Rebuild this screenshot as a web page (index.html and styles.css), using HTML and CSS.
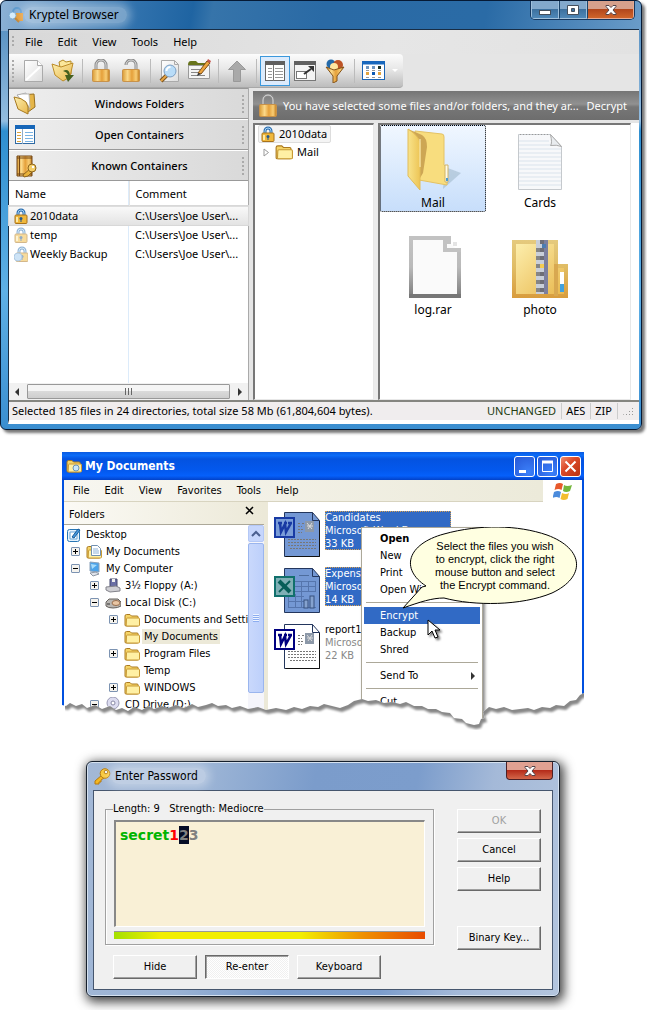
FILE: index.html
```html
<!DOCTYPE html>
<html lang="en">
<head>
<meta charset="utf-8">
<title>Kryptel</title>
<link rel="stylesheet" href="styles.css">
</head>
<body>
<svg class="defs" width="0" height="0" aria-hidden="true">
  <defs>
    <linearGradient id="gold" x1="0" x2="1"><stop offset="0" stop-color="#d99a35"/><stop offset=".3" stop-color="#fbd98a"/><stop offset=".55" stop-color="#e5a03a"/><stop offset=".8" stop-color="#f8cd75"/><stop offset="1" stop-color="#c07a1c"/></linearGradient>
    <linearGradient id="yel" x1="0" y1="0" x2="1" y2="1"><stop offset="0" stop-color="#fdf0b0"/><stop offset="1" stop-color="#e8b64a"/></linearGradient>
    <linearGradient id="paper" x1="0" y1="0" x2="1" y2="1"><stop offset="0" stop-color="#fff"/><stop offset="1" stop-color="#dedede"/></linearGradient>
    <linearGradient id="edge" gradientUnits="userSpaceOnUse" x1="0" y1="0" x2="0" y2="66"><stop offset="0" stop-color="#c4c4c4"/><stop offset=".5" stop-color="#bababa"/><stop offset="1" stop-color="#777"/></linearGradient>
    <linearGradient id="zipedge" gradientUnits="userSpaceOnUse" x1="0" y1="0" x2="0" y2="66"><stop offset="0" stop-color="#e6cd84"/><stop offset=".5" stop-color="#e0bc64"/><stop offset="1" stop-color="#d89a3a"/></linearGradient>
    <symbol id="lock" viewBox="0 0 20 24"><path d="M5 11V6a5 5 0 0 1 10 0v5" fill="none" stroke="#8a8a8a" stroke-width="3"/><path d="M5 11V6a5 5 0 0 1 10 0v5" fill="none" stroke="#ddd" stroke-width="1"/><rect x="1.500" y="10.500" width="17" height="12" rx="1" fill="url(#gold)" stroke="#c8924a"/></symbol>
    <symbol id="unlock" viewBox="0 0 20 24"><path d="M5 6a5 5 0 0 1 10 0v5" fill="none" stroke="#8a8a8a" stroke-width="3"/><path d="M5 6a5 5 0 0 1 10 0v5" fill="none" stroke="#ddd" stroke-width="1"/><rect x="1.500" y="10.500" width="17" height="12" rx="1" fill="url(#gold)" stroke="#c8924a"/></symbol>
    <symbol id="bluelock" viewBox="0 0 14 16"><path d="M4 8V5a3 3 0 0 1 6 0v3" fill="none" stroke="#2a6db0" stroke-width="3"/><path d="M4 8V5a3 3 0 0 1 6 0v3" fill="none" stroke="#a8d4f4" stroke-width="1"/><rect x="1" y="7" width="12" height="8.500" rx="1" fill="#f0b83c" stroke="#a8721a"/><path d="M3 9v5" stroke="#fde9a6" stroke-width="2"/><circle cx="7" cy="10.500" r="1.500" fill="#26588c"/><path d="M7 11v3" stroke="#26588c"/></symbol>
    <symbol id="folder" viewBox="0 0 16 14"><path d="M1 3q0-1.500 1.500-1.500h3.500l1.500 1.500h5.500q1.200 0 1.200 1.200V12q0 1-1 1H2Q1 13 1 12z" fill="#f5d467" stroke="#ab7a20"/><path d="M2.500 6q0-1 1-1h11q1 0 1 1v6q0 1-1 1H3q-.8 0-.8-1z" fill="#fff0a4" stroke="#c89a36"/></symbol>
    <symbol id="openfolder" viewBox="0 0 24 24"><path d="M7 3l14-1 1 13-7 5z" fill="#e5b548" stroke="#98701f"/><path d="M4 3l9-2 3 17z" fill="#fff" stroke="#aaa"/><path d="M9 2l7 0 1 14" fill="#fff" stroke="#bbb"/><path d="M1 5q8 1 12 5 3 4 2 12L5 17z" fill="url(#yel)" stroke="#a77a22"/></symbol>
    <symbol id="worddoc" viewBox="0 0 48 48"><path d="M11.500 2.500h28l7 8v36h-35z" fill="var(--page)" stroke="#23365d"/><path d="M39.500 2.500v8h7" fill="none" stroke="#23365d"/><path d="M25 13.500h3m1 0h2m-6 3h4m-4 3h5m-5 3h4M15 29.500h28M15 32.500h28M15 35.500h28M17 38.500h26" stroke="#777" stroke-dasharray="2 1"/><rect x="32" y="11" width="9" height="11" fill="#8c98a8"/><path d="M34 13l5 6m0-6l-4 6m-1-3h6" stroke="#ddd"/><rect x="2" y="8" width="19" height="19" fill="var(--badge)" stroke="var(--ink)" stroke-width="2"/><path d="M5 13h4M7 13l1 9 4-8 1 8 5-9M11 13h3M15 13h4" fill="none" stroke="var(--ink)" stroke-width="2.500"/><path d="M46.500 11v35.500h-34" fill="none" stroke="#111"/></symbol>
    <symbol id="exceldoc" viewBox="0 0 48 48"><path d="M11.500 2.500h28l7 8v36h-35z" fill="var(--page)" stroke="#23365d"/><path d="M39.500 2.500v8h7" fill="none" stroke="#23365d"/><path d="M26 9.500h10" stroke="#4e6d9e"/><path d="M22 15.500h21M22 20.500h21M22 25.500h21M15 30.500h16M15 35.500h16M15 41.500h28M15.500 28v13M22.500 28v13M28.500 15v26M35.500 15v10M42.500 15v10" stroke="#5575ad"/><rect x="31" y="34" width="4" height="8" fill="#85a2cf" stroke="#36507e"/><rect x="37" y="30" width="4" height="12" fill="#85a2cf" stroke="#36507e"/><rect x="2" y="11" width="19" height="19" fill="#7fafb5" stroke="#11706c" stroke-width="2"/><path d="M6 15l11 11" stroke="#075e58" stroke-width="4"/><path d="M17 15L6 26" stroke="#075e58" stroke-width="2"/></symbol>
    <symbol id="key" viewBox="0 0 18 18"><path d="M9 8l-7 6v3h4v-2h2v-2l3-2" fill="#f3b722" stroke="#b6790c"/><circle cx="12" cy="6.500" r="4.800" fill="#f8c83c" stroke="#b6790c"/><circle cx="13" cy="5" r="1.800" fill="#eef4fa" stroke="#b6790c"/></symbol>
  </defs>
</svg>

<section class="browser" aria-label="Kryptel Browser">
  <header class="aero-title">
    <svg class="app-icon" viewBox="0 0 16 16"><path d="M5 7V5a4 4 0 0 1 8 0v2" fill="none" stroke="#5d9ace" stroke-width="2"/><path d="M6 6h9v8h-4l-5-3z" fill="#e39a35"/><circle cx="4.500" cy="8.500" r="3.500" fill="#d6ecfa" stroke="#7fb0d8"/><path d="M7 11l4 4" stroke="#c08434" stroke-width="2"/></svg>
    <span class="glow">Kryptel Browser</span>
    <div class="aero-buttons">
      <button class="cap" aria-label="Minimize"><svg viewBox="0 0 14 12"><rect x="1.500" y="6.500" width="11" height="4" fill="#fff" stroke="#454f5c"/></svg></button><button class="cap" aria-label="Maximize"><svg viewBox="0 0 14 12"><path d="M1.500 1.500h11v9h-11zM5.500 4.500v3h3v-3z" fill="#fff" stroke="#454f5c" fill-rule="evenodd"/></svg></button><button class="cap cap-close" aria-label="Close"><svg viewBox="0 0 14 12"><path d="M2 1.500h3l2 2 2-2h3v1L9 6l3 3.500v1H9l-2-2-2 2H2v-1L5 6 2 2.500z" fill="#fff" stroke="#54454a"/></svg></button>
    </div>
  </header>
  <div class="client">
    <nav class="menubar"><i class="grip"></i><button>File</button><button>Edit</button><button>View</button><button>Tools</button><button>Help</button></nav>
    <div class="toolbar" role="toolbar" aria-label="Tools">
      <i class="grip"></i>
      <button aria-label="New"><svg viewBox="0 0 24 24"><path d="M3.500 1.500h13l5 5v16h-18z" fill="url(#paper)" stroke="#aaa"/><path d="M16.500 1.500v5h5" fill="#fff" stroke="#aaa"/><path d="M5 21L19 8" stroke="#fff" stroke-width="2"/></svg></button>
      <button aria-label="Open"><svg viewBox="0 0 24 24"><path d="M8 3l4-2 3 2 5-1v13l-9 4z" fill="#fbe79b" stroke="#b58a24"/><path d="M1 5l9 3 12-4-3 14-7 4L4 16z" fill="url(#yel)" stroke="#bd8c28"/><path d="M12 12q6-3 7 4h4l-6 7-3-7h3q-1-3-5-4" fill="#44601f"/></svg></button>
      <i class="sep"></i>
      <button aria-label="Encrypt"><svg viewBox="0 0 24 24"><use href="#lock" x="2" width="20" height="24"/></svg></button>
      <button aria-label="Decrypt"><svg viewBox="0 0 24 24"><use href="#unlock" x="2" width="20" height="24"/></svg></button>
      <i class="sep"></i>
      <button aria-label="Preview"><svg viewBox="0 0 24 24"><path d="M4.500 1.500h13l4 4v17h-17z" fill="url(#paper)" stroke="#aaa"/><path d="M17.500 1.500v4h4" fill="none" stroke="#aaa"/><path d="M10 16l-6 6" stroke="#7c5523" stroke-width="4"/><path d="M10 16l-6 6" stroke="#e7a443" stroke-width="2"/><circle cx="13" cy="12" r="6" fill="#b8dcf8" stroke="#7c9fc4"/><path d="M9.500 12a4 4 0 0 1 4-4" fill="none" stroke="#fff" stroke-width="2"/></svg></button>
      <button aria-label="Rename"><svg viewBox="0 0 24 24"><path d="M1 6q0-4 3-4h5l2 2h9v3H1z" fill="#66731b"/><path d="M1.500 6.500h21v13h-21z" fill="#f4f4f4" stroke="#9a9a9a"/><path d="M4 10.500h9M4 13.500h7M4 16.500h14" stroke="#888"/><path d="M11 14l9-12 3 2-9 11z" fill="#eda33d" stroke="#7b4d17"/><path d="M20 2l1-2 3 2-1 2z" fill="#c5524a"/><path d="M11 14l3 1-4 2z" fill="#333"/></svg></button>
      <i class="sep"></i>
      <button aria-label="Up"><svg viewBox="0 0 24 24"><path d="M12 2l8.500 8.500h-5v12h-7v-12h-5z" fill="#a9a9a9" stroke="#999"/></svg></button>
      <i class="sep"></i>
      <button class="on" aria-label="Show panel"><svg viewBox="0 0 24 24"><rect x="2.500" y="2.500" width="19" height="19" fill="#fff" stroke="#666"/><path d="M2 4h20" stroke="#606060" stroke-width="4"/><path d="M10.500 6v16" stroke="#777"/><path d="M5 9.500h4M5 12.500h4M5 15.500h4M5 18.500h4M12 9.500h8M12 12.500h8M12 15.500h8M12 18.500h8" stroke="#999"/></svg></button>
      <button aria-label="New window"><svg viewBox="0 0 24 24"><rect x="1.500" y="2.500" width="21" height="19" fill="#f4f4f4" stroke="#777"/><path d="M1 4h22" stroke="#606060" stroke-width="4"/><rect x="3.500" y="12.500" width="10" height="7" fill="#fff" stroke="#777"/><path d="M11 15l7-5" stroke="#333" stroke-width="2"/><path d="M15 7h6v6z" fill="#333"/></svg></button>
      <button aria-label="Filter"><svg viewBox="0 0 24 24"><circle cx="8" cy="5" r="4.500" fill="#2469a8"/><circle cx="15" cy="6" r="5" fill="#bd5426"/><circle cx="11" cy="8" r="4" fill="#ffe6a0"/><path d="M3 8l8 3 10-3-7 9v5l-4 2v-7z" fill="url(#gold)" stroke="#855318"/></svg></button>
      <i class="sep"></i>
      <button aria-label="Views"><svg viewBox="0 0 24 24"><rect x="1.500" y="2.500" width="22" height="18" fill="#fff" stroke="#1a64b5"/><path d="M1 4h23" stroke="#1767bd" stroke-width="3"/><path d="M5 7h3v3H5zM11 7h3v3h-3z" fill="#6d94bf"/><path d="M17 7h3v3h-3z" fill="#1d3528"/><path d="M5 13h3v3H5zM17 13h3v3h-3z" fill="#e2a33d"/><path d="M11 13h3v3h-3z" fill="#0c5ab4"/><path d="M5 11.500h3m3 0h3m3 0h3M5 18.500h3m3 0h3m3 0h3" stroke="#999"/></svg></button>
      <i class="caret"></i>
    </div>
    <div class="workspace">
      <aside class="side">
        <button class="accordion"><svg viewBox="0 0 24 24"><use href="#openfolder"/></svg><span>Windows Folders</span><i class="grip"></i></button>
        <button class="accordion"><svg viewBox="0 0 24 24"><rect x="2.500" y="2.500" width="19" height="18" fill="#fff" stroke="#2f6aa3"/><path d="M2 4h20" stroke="#1666b8" stroke-width="4"/><path d="M9.500 6v15" stroke="#8fadc9"/><path d="M4 9.500h4M4 12.500h4M4 15.500h4M4 18.500h4" stroke="#dba33e"/><path d="M12 9.500h8M12 12.500h8M12 15.500h8M12 18.500h8" stroke="#79b3e3"/></svg><span>Open Containers</span><i class="grip"></i></button>
        <button class="accordion"><svg viewBox="0 0 24 24"><path d="M4 2h15v20H4z" fill="url(#gold)" stroke="#734616"/><path d="M4 4h15M4 20h15M6.500 2v20" stroke="#734616"/><path d="M18 14l-8 7 1 2 4-1 5-5" fill="#e9b23b" stroke="#8d641a"/><circle cx="19" cy="14" r="4" fill="#f4ce68" stroke="#8d641a"/><circle cx="20" cy="13" r="1.200" fill="#fff"/></svg><span>Known Containers</span><i class="grip"></i></button>
        <div class="list">
          <table>
            <thead><tr><th>Name</th><th>Comment</th></tr></thead>
            <tbody>
              <tr class="picked"><td><svg viewBox="0 0 14 16"><use href="#bluelock"/></svg>2010data</td><td>C:\Users\Joe User\...</td></tr>
              <tr><td><svg class="dim" viewBox="0 0 14 16"><use href="#bluelock"/></svg>temp</td><td>C:\Users\Joe User\...</td></tr>
              <tr><td><svg class="dim" viewBox="0 0 14 16"><use href="#bluelock" x="1"/><circle cx="4" cy="11" r="4" fill="#9cc8ee" stroke="#5f95c9"/></svg>Weekly Backup</td><td>C:\Users\Joe User\...</td></tr>
            </tbody>
          </table>
        </div>
        <div class="hscroll"><i class="tri left"></i><b></b><i class="tri"></i></div>
      </aside>
      <div class="main">
        <div class="notice"><svg viewBox="0 0 20 24"><use href="#lock"/></svg><span>You have selected some files and/or folders, and they ar...</span><button>Decrypt</button></div>
        <div class="panes">
          <ul class="tree">
            <li><span class="node root"><svg viewBox="0 0 14 16"><use href="#bluelock"/></svg>2010data</span>
              <ul><li><svg class="twist" viewBox="0 0 7 9"><path d="M1 1l4.500 3.500L1 8z" fill="#fff" stroke="#999"/></svg><span class="node"><svg class="wide" viewBox="0 0 16 14"><use href="#folder"/></svg>Mail</span></li></ul>
            </li>
          </ul>
          <div class="tiles">
            <figure class="tile chosen"><svg viewBox="0 0 64 66"><defs><linearGradient id="fl" x1="0" x2="1"><stop offset="0" stop-color="#f8e38b"/><stop offset="1" stop-color="#edc556"/></linearGradient></defs><path d="M42 62l18-16-16-6z" fill="#90aabd" opacity=".45"/><path d="M14 4l27 3q2 0 2 3v28l3 2v18l-28-5z" fill="#f8dd7e" stroke="#e4c264"/><path d="M7 2l14 6q5 3 5 12l-4 26-3 5V20z" fill="#cda654"/><path d="M7 2q11 7 12 14v47L7 49z" fill="url(#fl)" stroke="#e2bc59"/><path d="M19 12v28" stroke="#fff3c0"/><path d="M44 38h3v17h-3z" fill="#fffbe8" stroke="#d0b368"/><path d="M45 51h2v3h-2z" fill="#4a9bd0"/></svg><figcaption>Mail</figcaption></figure>
            <figure class="tile"><svg viewBox="0 0 64 66"><path d="M10.500 7.500h32l11 12v43h-43z" fill="#f7f8fa" stroke="#c5c9cd"/><path d="M11 14h30M11 18h32M11 22h42M11 26h42M11 30h42M11 34h42M11 38h42M11 42h42M11 46h42M11 50h42M11 54h42M11 58h42" stroke="#dae3ec"/><path d="M12 7.500h30" stroke="#999" stroke-dasharray="1 2"/><path d="M42.500 7.500q2 9 0 11 6-1 11 1z" fill="#e9ecef" stroke="#aaa"/></svg><figcaption>Cards</figcaption></figure>
            <figure class="tile"><svg viewBox="0 0 64 66"><path d="M10 4h34l14 14v44H10z" fill="#fafafa"/><path d="M8 4h40M10 2v60M58 14v50" stroke="url(#edge)" stroke-width="4"/><path d="M10 2.100v60M58 14v50" stroke="url(#edge)" stroke-width="4"/><path d="M8 4h40v4h-4v8h16" fill="none" stroke="#c2c2c2" stroke-width="4"/><path d="M52 8h4v4h-4z" fill="#e4e4e4"/><path d="M8 62h52" stroke="#777" stroke-width="4"/></svg><figcaption>log.rar</figcaption></figure>
            <figure class="tile"><svg viewBox="0 0 64 66"><path d="M6 8h42v24h10v30H6z" fill="url(#yel)" stroke="url(#zipedge)" stroke-width="4"/><path d="M48 30v32" stroke="#d8a850" stroke-width="4"/><path d="M28 6h12v54H28z" fill="#c9cfd9"/><path d="M38 6v54" stroke="#7c7f9e" stroke-width="4"/><path d="M34 6v54" stroke="#6e6e76" stroke-width="4" stroke-dasharray="4 4"/><path d="M30 10v50" stroke="#858585" stroke-width="4" stroke-dasharray="4 4" stroke-dashoffset="4"/><path d="M32 30h4v4h-4z" fill="#f5cc50"/><path d="M34 10h4v4h-4z" fill="#4b7cb2"/><path d="M54 38v20" stroke="#fff" stroke-width="4"/><path d="M54 50v8" stroke="#42a1dd" stroke-width="4"/></svg><figcaption>photo</figcaption></figure>
          </div>
        </div>
      </div>
    </div>
    <footer class="status"><span>Selected 185 files in 24 directories, total size 58 Mb (61,804,604 bytes).</span><span class="state">UNCHANGED</span><span>AES</span><span>ZIP</span><span class="end"><i class="corner"></i></span></footer>
  </div>
</section>

<section class="explorer" aria-label="My Documents">
  <header class="luna-title">
    <svg class="luna-icon" viewBox="0 0 16 14"><use href="#folder"/><circle cx="10" cy="9" r="3" fill="#c9e7fb" stroke="#6a92b5"/></svg>
    <span>My Documents</span>
    <div class="luna-buttons">
      <button aria-label="Minimize"><svg viewBox="0 0 21 21"><path d="M5 14h7v3H5z" fill="#fff"/></svg></button>
      <button aria-label="Maximize"><svg viewBox="0 0 21 21"><path d="M5.500 6.500h10v9h-10z" fill="none" stroke="#fff"/><path d="M5 6h11" stroke="#fff" stroke-width="3"/></svg></button>
      <button class="red" aria-label="Close"><svg viewBox="0 0 21 21"><path d="M5.500 5.500l10 10m0-10l-10 10" stroke="#fff" stroke-width="2"/></svg></button>
    </div>
  </header>
  <div class="luna-frame">
  <nav class="luna-menu"><button>File</button><button>Edit</button><button>View</button><button>Favorites</button><button>Tools</button><button>Help</button>
    <span class="flag"><svg viewBox="0 0 20 18"><path d="M3 2q4-2 7 0l-1.500 6q-3-2-7 0z" fill="#e7592c"/><path d="M11 3q3 2 8 0l-2 6q-4 2-7 0z" fill="#74b63c"/><path d="M1 10q4-2 7 0l-1.500 6q-3-2-7 0z" fill="#4b8bdc"/><path d="M9 11q4 2 7 0l-1.500 6q-4 2-7 0z" fill="#f3bd2e"/></svg></span></nav>
  <div class="luna-body">
    <aside class="folders">
      <div class="folders-head">Folders<button aria-label="Close folders"><svg viewBox="0 0 9 9"><path d="M1 1l7 7m0-7L1 8" stroke="#000" stroke-width="1.500"/></svg></button></div>
      <div class="folders-body">
        <ul>
          <li class="d0"><svg viewBox="0 0 16 16"><rect x="1.500" y="2.500" width="12" height="12" rx="2" fill="#e5f2fd" stroke="#2977b5"/><path d="M4 5h7v7H4z" fill="#fff" stroke="#69a5d6"/><path d="M6 10l6-8 2 1-6 8z" fill="#4a9ade" stroke="#145a99"/></svg><span>Desktop</span></li>
          <li class="d1"><i class="box plus"></i><svg viewBox="0 0 16 16"><use href="#folder" y="1" width="16" height="14"/><path d="M5.500 1.500h6l3 3v7h-9z" fill="#fff" stroke="#7190b0"/><path d="M7 5h5M7 7h6M7 9h6" stroke="#8fb3d8"/></svg><span>My Documents</span></li>
          <li class="d1"><i class="box"></i><svg viewBox="0 0 16 16"><path d="M4 1l9 1v9l-9-1z" fill="#4aa3ea" stroke="#8aa0b8"/><path d="M5 3l6 1-5 4z" fill="#a7dcfb"/><path d="M4 12l6-1 3 2-6 2z" fill="#dfe3ea" stroke="#8f98a5"/></svg><span>My Computer</span></li>
          <li class="d2"><i class="box plus"></i><svg viewBox="0 0 16 16"><path d="M5 1h7v8H5z" fill="#6a6fa5" stroke="#44486f"/><path d="M7 1h3v3H7z" fill="#eee"/><path d="M1 9l10-1 4 2v3l-10 1-4-2z" fill="#cfcfd4" stroke="#83838b"/></svg><span>3½ Floppy (A:)</span></li>
          <li class="d2"><i class="box"></i><svg viewBox="0 0 16 16"><path d="M1 7l3-3h9l3 3v4q-3 2-8 2t-7-2z" fill="#b9b6b2" stroke="#66625e"/><ellipse cx="11" cy="8" rx="4" ry="2.500" fill="#e9c6a4" stroke="#996f4e"/><path d="M2 9h3" stroke="#333"/></svg><span>Local Disk (C:)</span></li>
          <li class="d3"><i class="box plus"></i><svg viewBox="0 0 16 14"><use href="#folder"/></svg><span>Documents and Settings</span></li>
          <li class="d3"><i class="box none"></i><svg viewBox="0 0 16 14"><use href="#folder"/></svg><span class="hot">My Documents</span></li>
          <li class="d3"><i class="box plus"></i><svg viewBox="0 0 16 14"><use href="#folder"/></svg><span>Program Files</span></li>
          <li class="d3"><i class="box none"></i><svg viewBox="0 0 16 14"><use href="#folder"/></svg><span>Temp</span></li>
          <li class="d3"><i class="box plus"></i><svg viewBox="0 0 16 14"><use href="#folder"/></svg><span>WINDOWS</span></li>
          <li class="d2"><i class="box"></i><svg viewBox="0 0 16 16"><circle cx="8" cy="6" r="6" fill="#dcdcf0" stroke="#9a9ab5"/><circle cx="8" cy="6" r="2" fill="#fff" stroke="#8888a5"/></svg><span>CD Drive (D:)</span></li>
        </ul>
        <div class="vscroll"><button aria-label="Scroll up"><svg viewBox="0 0 14 14"><path d="M3 9l4-4 4 4" fill="none" stroke="#4a5f8f" stroke-width="2"/></svg></button><b></b></div>
      </div>
    </aside>
    <div class="files">
      <div class="file sel"><svg viewBox="0 0 48 48"><use href="#worddoc"/></svg><p>Candidates<small>Microsoft Word D</small><small>33 KB</small></p></div>
      <div class="file sel"><svg viewBox="0 0 48 48"><use href="#exceldoc"/></svg><p>Expens<small>Microso</small><small>14 KB</small></p></div>
      <div class="file"><svg viewBox="0 0 48 48"><use href="#worddoc"/></svg><p>report1<small>Microso</small><small>22 KB</small></p></div>
    </div>
  </div>
  </div>
  <div class="context" role="menu">
    <button class="strong">Open</button><button>New</button><button>Print</button><button>Open Wi</button><hr>
    <button class="hit">Encrypt</button><button>Backup</button><button>Shred</button><hr>
    <button class="more">Send To<i class="tri"></i></button><hr><button>Cut</button>
  </div>
  <div class="balloon">
    <svg viewBox="0 0 178 82"><path d="M24 59C-2 42 5 17 42 7 78-3 116-2 145 8c38 14 39 42 5 58-31 13-78 13-108 5-12 0-24 4-41 10L20 60z" fill="#ffffe1" stroke="#000"/></svg>
    <p>Select the files you wish<br>to encrypt, click the right<br>mouse button and select<br>the Encrypt command.</p>
  </div>
  <svg class="pointer" viewBox="0 0 14 21"><path d="M1 1v15l4-4 3 7 3-1-3-7h5z" fill="#fff" stroke="#000"/></svg>
  <svg class="torn" viewBox="0 0 522 42" preserveAspectRatio="none">
    <defs><path id="rip" d="M-4 16L4 18 8 15 14 18 20 16 25 20 33 17 40 21 48 18 54 22 60 20 66 23 72 19 80 22 86 18 92 21 100 18 106 20 114 17 122 20 130 16 136 19 144 17 150 15 156 18 164 17 170 20 178 18 186 21 196 19 204 22 214 20 224 22 232 19 240 21 248 18 256 19 262 16 270 18 278 20 286 17 292 13 300 11 306 13 314 12 322 15 330 14 338 16 344 14 352 18 360 18 366 21 374 21 380 24 388 25 392 30 400 31 404 35 412 37 417 36 419 31 423 30 421 24 427 19 434 21 442 19 450 22 458 21 466 20 472 22 480 19 488 20 494 17 502 18 508 13 514 12 518 7 526 3V50H-4z"/><clipPath id="below"><use href="#rip"/></clipPath><filter id="soft" x="-5%" y="-20%" width="110%" height="140%"><feGaussianBlur stdDeviation="1.300"/></filter><mask id="gap"><rect width="522" height="42" fill="#fff"/><use href="#rip" transform="translate(2 4)" filter="url(#soft)"/></mask></defs>
    <use href="#rip" fill="#fff"/>
    <g clip-path="url(#below)"><rect x="3" width="519" height="42" fill="#888" mask="url(#gap)"/></g>
  </svg>
</section>

<section class="dialog" aria-label="Enter Password">
  <header class="dialog-title"><svg class="key" viewBox="0 0 18 18"><use href="#key"/></svg><span class="glow">Enter Password</span><button class="cap cap-close" aria-label="Close"><svg viewBox="0 0 14 12"><path d="M2 1.500h3l2 2 2-2h3v1L9 6l3 3.500v1H9l-2-2-2 2H2v-1L5 6 2 2.500z" fill="#fff" stroke="#54454a"/></svg></button></header>
  <div class="dialog-client">
    <div class="entry">
      <fieldset><legend>Length: 9 &nbsp; Strength: Mediocre</legend>
        <div class="secret" role="textbox" aria-label="Password" contenteditable="true" spellcheck="false"><span class="ok">secret</span><span class="bad">1</span><span class="cur">2</span><span class="rest">3</span></div>
        <div class="meter"></div>
      </fieldset>
      <div class="row"><button class="classic">Hide</button><button class="classic down">Re-enter</button><button class="classic">Keyboard</button></div>
    </div>
    <div class="actions"><button class="classic" disabled>OK</button><button class="classic">Cancel</button><button class="classic">Help</button><button class="classic apart">Binary Key...</button></div>
  </div>
</section>
</body>
</html>
```
FILE: styles.css
```css
* { box-sizing: border-box; }
body { margin: 0; background: #fff; color: #000; font: 11px/16px "Noto Sans", sans-serif; overflow-x: hidden; }
button { font: inherit; color: inherit; background: none; border: 0; padding: 0; margin: 0; }
ul { list-style: none; margin: 0; padding: 0; }
svg { display: block; flex: none; }
.defs { position: absolute; }

/* Kryptel Browser */
.browser { margin-right: 5px; padding: 0 2px 5px 7px; border: 1px solid #061a35; border-radius: 6px; background: linear-gradient(100deg, #8db2d6 0, #3273ae 130px, #1f64a2 190px, #3674aa 210px, #2a6aa5 320px, #2a6ba6 480px, #6a9cc9 100%) top / 100% 30px no-repeat, linear-gradient(#4a86bb, #93bde0 120px, #2f8fd0 130px, #5fb0e6 290px, #3a8ed0); box-shadow: 3px 3px 3px #777; }
.aero-title { display: flex; align-items: center; height: 28px; padding-right: 4px; }
.app-icon { width: 16px; height: 16px; }
.glow { padding: 0 8px 0 5px; font-size: 12px; border-radius: 10px; background: rgba(255,255,255,.33); box-shadow: 0 0 8px 4px rgba(255,255,255,.33); }
.aero-buttons { display: flex; align-self: flex-start; margin-left: auto; border: 1px solid #16385f; border-top: 0; border-radius: 0 0 5px 5px; overflow: hidden; }
.cap { display: grid; place-items: center; width: 28px; height: 18px; border: 1px solid #9fc0dc; border-top: 0; background: linear-gradient(#83a9cc 45%, #3d719f 50%, #4f88b8); }
.cap + .cap { border-left-color: #1b4369; }
.cap svg { width: 14px; height: 12px; }
.cap-close { width: 47px; background: linear-gradient(#d6a08b 45%, #b2471c 50%, #d0652a); border-color: #e5ab94; }
.client { border: 1px solid #182d45; border-right: 0; border-bottom: 4px solid #fff; background: #e5e5e5; }
.menubar { display: flex; align-items: center; gap: 15px; height: 24px; padding-left: 3px; background: linear-gradient(90deg, #d8d8d8, #e6e6e6 60%, #e2e2e2); }
.grip { width: 2px; height: 12px; background: repeating-linear-gradient(#aaa 0 2px, transparent 2px 4px); }
.menubar .grip { margin-right: -4px; }
.toolbar { display: flex; align-items: center; width: fit-content; height: 34px; padding-left: 3px; border-radius: 0 4px 4px 0; background: linear-gradient(#fcfcfc, #e8e8e8 45%, #bcbcbc); border-bottom: 1px solid #a8a8a8; }
.toolbar .grip { height: 22px; margin-right: 4px; }
.toolbar button { display: grid; place-items: center; width: 30px; height: 30px; }
.toolbar button svg { width: 24px; height: 24px; }
.toolbar .on { background: #dcebfc; border: 1px solid #3b98dc; }
.toolbar .on svg { margin: -1px; }
.sep { width: 1px; height: 24px; margin: 0 3px 0 4px; background: #bbb; }
.caret { margin: 0 5px 0 4px; border: 3px solid transparent; border-top-color: #fff; border-bottom: 0; }
.workspace { display: flex; gap: 4px; border-bottom: 2px solid #858580; }
.side { width: 240px; flex: none; display: flex; flex-direction: column; background: #fff; border-right: 1px solid #aaa; }
.accordion { display: flex; align-items: center; height: 31px; padding: 0 4px 0 4px; border-top: 1px solid #fff; border-bottom: 1px solid #999; background: linear-gradient(90deg, #eee, #d9d9d9); }
.accordion:first-child { border-top-color: #999; }
.accordion svg { width: 24px; height: 24px; }
.accordion span { flex: 1; text-align: center; font-weight: 500; }
.accordion .grip { height: 18px; }
.list { flex: 1; background: linear-gradient(#dcebfa, #dcebfa) 119px 0 / 1px 100% no-repeat; }
table { width: 100%; border-collapse: collapse; table-layout: fixed; }
th { height: 25px; padding: 2px 6px 0; text-align: left; font-weight: 400; border-bottom: 1px solid #ddd; border-right: 1px solid #e4e4e4; }
th:last-child { border-right: 0; }
th:first-child { width: 120px; }
td { height: 19px; padding: 0 6px; white-space: nowrap; }
td:first-child { padding-left: 5px; }
td svg { display: inline-block; width: 14px; height: 16px; margin: -4px 2px -1px 0; vertical-align: text-bottom; }
.dim { opacity: .5; }
.picked { background: linear-gradient(#fafafa, #e3e3e3); box-shadow: 0 0 0 1px #d8d8d8; }
.hscroll { display: flex; align-items: center; gap: 8px; height: 17px; padding: 0 6px; background: #f1f1f1; }
.hscroll b { flex: 1; height: 15px; border: 1px solid #999; border-radius: 1px; background: linear-gradient(90deg, #666 1px, transparent 1px 3px, #666 3px 4px, transparent 4px 6px, #666 6px 7px, transparent 7px) center / 7px 7px no-repeat, linear-gradient(#f5f5f5 45%, #dadada 50%, #cecece); }
.tri { border: 4px solid transparent; border-left-color: #333; border-right: 0; }
.tri.left { border: 4px solid transparent; border-right-color: #333; border-left: 0; }
.main { flex: 1; min-width: 0; display: flex; flex-direction: column; padding-top: 3px; }
.notice { display: flex; align-items: center; gap: 5px; height: 29px; padding: 0 12px 0 5px; color: #fff; background: linear-gradient(#757575, #919191 45%, #777 55%, #6d6d6d); }
.notice svg { width: 20px; height: 24px; }
.notice span { flex: 1; white-space: nowrap; }
.panes { flex: 1; display: flex; gap: 4px; margin-top: 3px; padding-right: 8px; background: linear-gradient(#fff, #fff) right / 8px 100% no-repeat, #ececec; }
.tree, .tiles { border: 2px solid #777; border-width: 2px 1px 1px 2px; border-right-color: #e8e8e8; border-bottom-color: #e8e8e8; background: #fff; }
.tree { width: 121px; padding-left: 3px; line-height: 16px; }
.node { display: flex; align-items: center; gap: 4px; height: 18px; padding: 0 3px 0 2px; }
.root { width: fit-content; border: 1px solid #ddd; border-radius: 2px; background: #f4f4f4; }
.node svg { width: 14px; height: 16px; }
.node .wide { width: 18px; height: 16px; }
.tree ul li { display: flex; align-items: center; gap: 3px; padding-left: 5px; }
.twist { width: 7px; height: 9px; }
.tiles { flex: 1; display: grid; grid-template-columns: 106px 106px; grid-template-rows: 87px 87px; gap: 20px 1px; min-height: 277px; }
.tile { margin: 0; display: flex; flex-direction: column; align-items: center; }
.tile svg { width: 64px; height: 66px; margin: 2px 0 0; }
.tile figcaption { line-height: 20px; font-size: 12px; }
.chosen { border: 1px dotted #000; border-radius: 2px; background: linear-gradient(#f0f7ff, #c7defb); }
.chosen svg { margin-top: 1px; }
.status { display: flex; align-items: center; gap: 5px; height: 18px; padding: 0 5px 0 3px; background: #f0edee; white-space: nowrap; }
.status span + span { padding-left: 4px; border-left: 1px solid #ccc; }
.status .state { margin-left: auto; border: 0; color: #233c12; }
.end { display: flex; align-items: center; height: 16px; }
.corner { width: 12px; height: 9px; background: radial-gradient(circle, #999 1px, transparent 1px) 0 0 / 3px 3px; clip-path: polygon(100% 0, 100% 100%, 0 100%); }

/* My Documents */
.explorer { position: relative; margin: 22px 63px 0 62px; height: 278px; overflow: hidden; font: 11px/13px "DejaVu Sans Condensed", "Noto Sans", sans-serif; background: #fff; }
.luna-frame { border: 2px solid #0050e0; border-top: 0; border-bottom: 0; }
.luna-title { display: flex; align-items: center; gap: 3px; height: 28px; padding: 0 3px 0 4px; color: #fff; font-weight: 700; font-size: 12px; background: linear-gradient(#0a5ae0, #0b6cf8 12%, #0453e0 25%, #0358ee 65%, #0560fb 85%, #0241c8); }
.luna-icon { width: 16px; height: 14px; }
.luna-buttons { display: flex; gap: 2px; margin-left: auto; }
.luna-buttons button { width: 21px; height: 21px; border: 1px solid #fff; border-radius: 3px; background: radial-gradient(circle at 70% 80%, #3b80fa, #2657d5); }
.luna-buttons svg { width: 21px; height: 21px; margin: -1px; }
.luna-buttons .red { background: linear-gradient(135deg, #ef8d70, #dc4a29 40%, #b93312); }
.luna-menu { display: flex; align-items: stretch; gap: 15px; height: 22px; padding-left: 9px; background: linear-gradient(90deg, #f7f6f0, #ebe9d8); border-bottom: 1px solid #d8d4c0; }
.flag { display: grid; place-items: center; width: 39px; margin: 0 0 -1px auto; background: #fff; }
.flag svg { width: 20px; height: 18px; }
.luna-body { display: flex; }
.folders { width: 204px; flex: none; border-right: 4px solid #ece9d8; }
.folders-head { display: flex; align-items: center; justify-content: space-between; height: 23px; padding: 2px 10px 0 5px; background: linear-gradient(90deg, #fbfaf5, #ece9d8); border-bottom: 1px solid #aca899; }
.folders-head button { margin-bottom: 8px; }
.folders-head svg { width: 9px; height: 9px; }
.folders-body { display: flex; height: 204px; overflow: hidden; }
.folders ul { flex: 1; min-width: 0; overflow: hidden; padding-top: 1px; }
.folders li { display: flex; align-items: center; height: 17px; white-space: nowrap; }
.folders li svg { width: 16px; height: 16px; margin: 0 2px 0 6px; }
.folders li span { padding: 0 2px; line-height: 15px; }
.folders .d0 svg { margin-left: 2px; }
.d1 { padding-left: 7px; } .d2 { padding-left: 26px; } .d3 { padding-left: 45px; }
.hot { background: #ece9d8; }
.box { width: 9px; height: 9px; flex: none; border: 1px solid #7c93b2; border-radius: 1px; background: linear-gradient(#000, #000) center / 5px 1px no-repeat, #f5f3ee; }
.plus { background: linear-gradient(#000, #000) center / 5px 1px no-repeat, linear-gradient(#000, #000) center / 1px 5px no-repeat, #f5f3ee; }
.none { visibility: hidden; }
.vscroll { width: 16px; flex: none; background: #f5f5fb; }
.vscroll button { display: grid; place-items: center; width: 16px; height: 17px; border: 1px solid #b4c8f6; border-radius: 2px; background: #c6d6fc; }
.vscroll button svg { width: 14px; height: 14px; }
.vscroll b { display: block; height: 150px; margin-top: 1px; border: 1px solid #9ab5ee; border-radius: 2px; background: repeating-linear-gradient(#eef4ff 0 1px, #8cadf0 1px 2px) center / 6px 8px no-repeat, linear-gradient(90deg, #c9d8fc, #bdd0fb); }
.files { padding: 8px 0 0 5px; }
.file { --page: #fff; --badge: #fff; --ink: #000080; display: flex; gap: 4px; height: 56px; }
.file svg { width: 48px; height: 48px; }
.file p { margin: 1px 0 0; height: 39px; width: 126px; overflow: hidden; white-space: nowrap; }
.file small { display: block; font-size: 11px; color: #888; }
.sel { --page: #7498d4; --badge: #7a9dd8; --ink: #183aa4; }
.sel p { color: #fff; background: #316ac5; outline: 1px dotted #d8a050; outline-offset: -1px; }
.sel small { color: #fff; }
.context { position: absolute; left: 299px; top: 75px; width: 122px; height: 203px; padding: 2px; border: 1px solid #aca899; background: #fff; box-shadow: 2px 2px 3px #888; }
.context button { display: block; width: 100%; height: 17px; padding-left: 16px; text-align: left; }
.context hr { height: 1px; margin: 4px 2px; border: 0; background: #aca899; }
.context .strong { font-weight: 700; }
.context .hit { color: #fff; background: #316ac5; }
.context .more { display: flex; align-items: center; justify-content: space-between; padding-right: 5px; }
.balloon { position: absolute; left: 340px; top: 75px; width: 178px; font: 11px/13px "Liberation Sans", sans-serif; text-align: center; }
.balloon p { position: absolute; left: 8px; right: 0; top: 13px; margin: 0; }
.pointer { position: absolute; left: 365px; top: 167px; width: 14px; height: 21px; filter: drop-shadow(2px 2px 1px #777); }
.torn { position: absolute; left: 0; bottom: 0; width: 100%; height: 42px; }

/* Enter Password */
.dialog { margin: 31px 87px 14px 86px; padding: 0 6px 6px; font: 11px/16px "DejaVu Sans Condensed", "Noto Sans", sans-serif; border: 1px solid #16202d; border-radius: 6px; background: linear-gradient(100deg, #a3b8d6 0, #9ab3d5 25%, #7b9ccb 45%, #7c9dcc 65%, #a4b9d8 80%, #b3c5de); box-shadow: inset 0 0 0 1px #d5e1ef, 2px 3px 11px 2px #444; }
.dialog-title { display: flex; align-items: center; height: 28px; }
.dialog-title .cap { align-self: flex-start; margin-left: auto; border: 1px solid #4b2025; border-top: 0; border-radius: 0 0 4px 4px; background: linear-gradient(#e0a192 45%, #b52c1a 50%, #d3674a); }
.key { width: 18px; height: 18px; }
.dialog .glow { padding-left: 4px; }
.dialog-client { display: flex; gap: 23px; padding: 10px 11px 10px; border: 1px solid #46566e; background: #f0f0f0; }
.entry { flex: 1; }
fieldset { margin: 0; padding: 3px 8px 5px; border: 1px solid #a0a0a0; box-shadow: inset 1px 0 #fff, 1px 1px #fff; }
legend { margin-left: -1px; padding: 0; }
.secret { height: 107px; padding: 4px 4px; font: 700 14px/18px "DejaVu Sans", sans-serif; color: #808080; background: #f9f0d6; border: 2px solid #888; border-right: 1px solid #fff; border-bottom: 1px solid #fff; }
.ok { color: #00b400; } .bad { color: #f00; } .cur { display: inline-block; background: #050c26; }
.meter { height: 8px; margin-top: 4px; border-top: 1px solid #999; background: linear-gradient(90deg, #a4e000, #f2ee00 15%, #f2ee00 60%, #ef9000 80%, #e84b00); }
.row { display: flex; gap: 8px; margin: 10px 0 0 8px; }
.classic { width: 84px; height: 24px; border: 1px solid #fff; border-right-color: #696969; border-bottom-color: #696969; background: #f0f0f0; box-shadow: inset -1px -1px #a0a0a0; }
.classic:disabled { color: #a0a0a0; }
.down { border-color: #696969 #fff #fff #696969; box-shadow: inset 1px 1px #a0a0a0; background: repeating-conic-gradient(#fff 0 25%, #f0f0f0 0 50%) 0 0 / 2px 2px; }
.actions { display: flex; flex-direction: column; gap: 5px; padding-top: 8px; }
.apart { margin-top: 30px; }
```
